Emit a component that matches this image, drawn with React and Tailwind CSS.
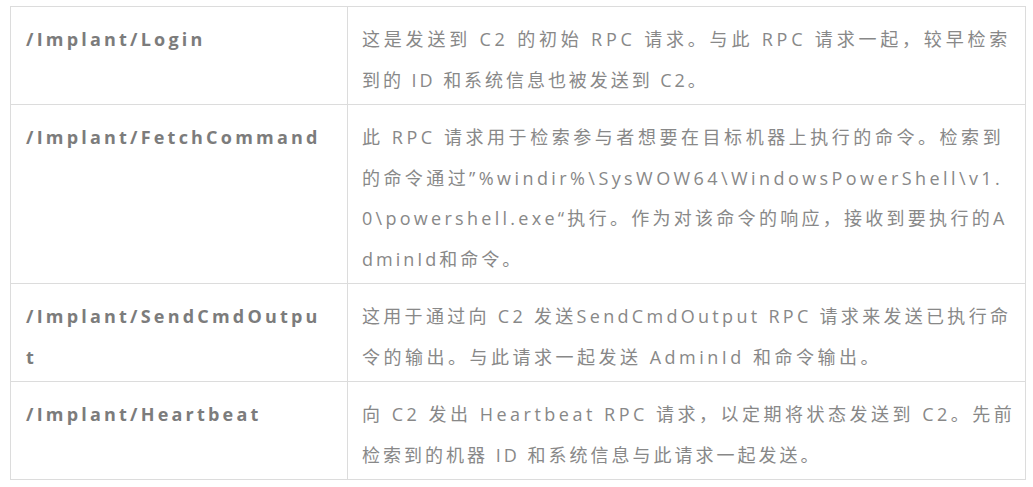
import React from 'react'

// each description line carries its own letter-spacing so wraps land where the original's do
const rows = [
  {
    path: ['/Implant/Login'],
    desc: [
      ['这是发送到 C2 的初始 RPC 请求。与此 RPC 请求一起，较早检索', 'tracking-[3.8px]'],
      ['到的 ID 和系统信息也被发送到 C2。', 'tracking-[2.95px]'],
    ],
  },
  {
    path: ['/Implant/FetchCommand'],
    desc: [
      ['此 RPC 请求用于检索参与者想要在目标机器上执行的命令。检索到', 'tracking-[3.55px]'],
      ['的命令通过”%windir%\\SysWOW64\\WindowsPowerShell\\v1.', 'tracking-[3.42px]'],
      ['0\\powershell.exe“执行。作为对该命令的响应，接收到要执行的A', 'tracking-[3.28px]'],
      ['dminId和命令。', 'tracking-[3px]'],
    ],
  },
  {
    path: ['/Implant/SendCmdOutpu', 't'],
    desc: [
      ['这用于通过向 C2 发送SendCmdOutput RPC 请求来发送已执行命', 'tracking-[3.3px]'],
      ['令的输出。与此请求一起发送 AdminId 和命令输出。', 'tracking-[3.5px]'],
    ],
  },
  {
    path: ['/Implant/Heartbeat'],
    desc: [
      ['向 C2 发出 Heartbeat RPC 请求，以定期将状态发送到 C2。先前', 'tracking-[3.5px]'],
      ['检索到的机器 ID 和系统信息与此请求一起发送。', 'tracking-[3px]'],
    ],
  },
]

export default function App() {
  return (
    <div
      className="w-[1033px] h-[487px] bg-white pt-[6px] pl-[10px]"
      style={{ fontFamily: '"Open Sans", "Noto Sans CJK SC", sans-serif' }}
    >
      <table className="border-collapse w-[1016px] table-fixed">
        <colgroup>
          <col className="w-[337px]" />
          <col />
        </colgroup>
        <tbody>
          {rows.map((row, i) => (
            <tr key={i}>
              <td className="border border-[#dcdcdc] align-top pl-[15px] pt-[12px] pb-[4px] text-[18px] leading-[40.5px] font-bold tracking-[3.2px] text-[#7c7c7c] whitespace-nowrap">
                {row.path.map((line, j) => (
                  <div key={j}>{line}</div>
                ))}
              </td>
              <td className="border border-[#dcdcdc] align-top pl-[14px] pt-[12px] pb-[4px] text-[18px] leading-[40.5px] text-[#888888] whitespace-pre">
                {row.desc.map(([line, ls], j) => (
                  <div key={j} className={ls}>{line}</div>
                ))}
              </td>
            </tr>
          ))}
        </tbody>
      </table>
    </div>
  )
}
